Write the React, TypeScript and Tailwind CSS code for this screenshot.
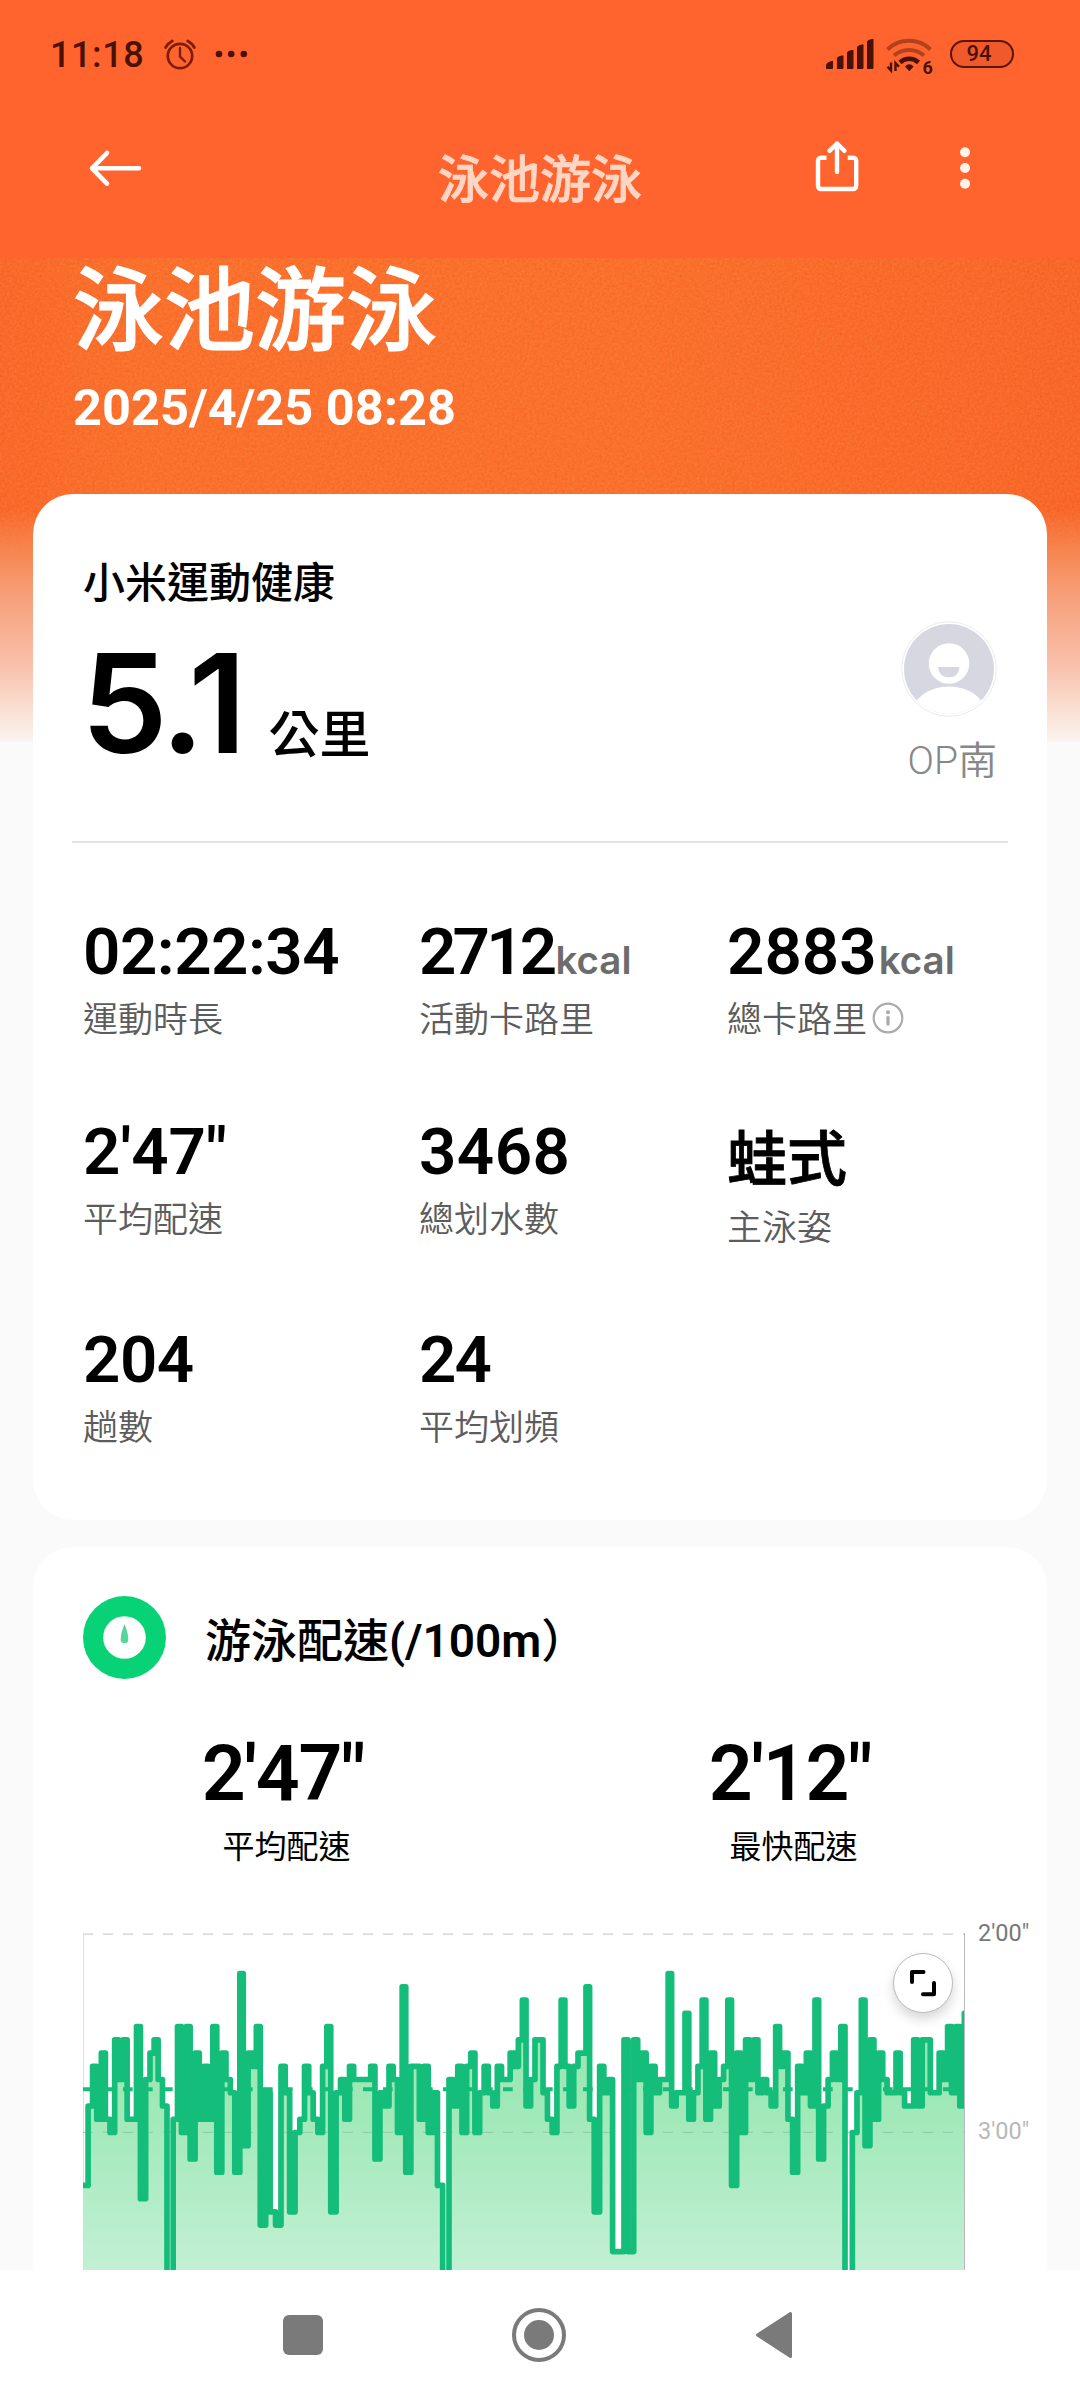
import { ReactNode } from "react";

// Each row is the x of its first lap followed by the pace level of every lap.
// One level is 4 s / 100 m, level 0 is 2'12".
const laps: number[][] = [
  [39, 16, 10, 7, 11, 6, 11, 12],
  [134, 5, 8, 5, 11, 11],
  [199.5, 4, 17, 8, 6, 5, 8, 10],
  [291, 30],
  [309.5, 11],
  [322.5, 4, 12, 4, 14, 6, 11, 7, 11],
  [428.5, 4, 15, 6, 8, 9, 15],
  [509.5, 0, 13, 6, 7],
  [559, 4, 19, 9, 18, 19],
  [633, 7, 9, 18, 12, 11],
  [703.5, 7, 9, 11, 12, 7],
  [770.5, 4, 18, 9, 8, 11],
  [838.5, 7, 8, 8, 8, 8],
  [902, 7, 14, 9, 10],
  [957, 7, 8, 12],
  [996.5, 1, 15, 7, 7, 11, 7, 12, 9, 16],
  [1118, 27],
  [1137, 8, 10, 7, 12, 7],
  [1202.5, 6, 12, 9, 7, 9, 10, 7, 8, 8],
  [1320.5, 6, 7, 5],
  [1357, 2, 10, 8, 5, 5, 9, 11, 12, 7],
  [1473.5, 2, 7, 10, 7],
  [1524, 6, 6],
  [1548, 1, 11, 18, 7, 9, 8, 21, 21],
  [1662, 5, 21, 5, 8, 6, 12, 7, 9, 8, 8],
  [1794.5, 0, 10, 9, 9],
  [1845, 3, 11, 9, 7],
  [1896.5, 2, 11, 6, 10, 8, 7],
  [1973.5, 2, 16, 6, 12, 5, 8, 5, 9, 8, 9, 10],
  [2117, 4, 7, 6, 11, 15, 7, 9, 6, 10],
  [2235, 2, 14, 10, 8, 6, 8],
  [2312.5, 4],
  [2325, 38],
  [2347, 12, 9],
  [2374, 2, 13, 5, 11, 6, 8, 9, 9],
  [2478, 6, 9, 10, 10],
  [2531, 5, 10, 5, 5, 9, 9],
  [2607.5, 6, 8, 4, 9, 4, 10],
  [2683, 3]
];

const CHART_LEFT = 39;
const CHART_RIGHT = 2685;
const CHART_BOTTOM = 1080;

const getPaceLine = () => {
  const points: string[] = [];
  laps.forEach(([start, ...levels], i) => {
    const end = laps[i + 1]?.[0] ?? CHART_RIGHT;
    const total = levels.reduce((sum, level) => sum + 33 + level, 0);
    let x = start;
    levels.forEach((level) => {
      const y = 191 + level * 39.7;
      const next = x + ((end - start) * (33 + level)) / total;
      points.push(`${x.toFixed(1)} ${y.toFixed(1)}`);
      points.push(`${next.toFixed(1)} ${y.toFixed(1)}`);
      x = next;
    });
  });
  return points.join(" L");
};

const StatusBar = () => {
  return (
    <div className="flex items-center justify-between h-[108px] pl-[50px] pr-[66px] text-[#4a1206]">
      <div className="flex items-center">
        <span className="mt-[2px] text-[36px] leading-[40px] font-medium tracking-[0.6px]">
          11:18
        </span>
        <svg className="ml-[19px]" width="34" height="32" viewBox="0 0 34 32" fill="none" stroke="#7d1c09" strokeLinecap="round">
          <circle cx="17" cy="18" r="12.2" strokeWidth="2.7" />
          <path d="M17 10v8.5l5 5" strokeWidth="2.4" />
          <path d="M2.6 9.5c1.4-2.6 3.8-5 6.7-6.5M31.4 9.500c-1.4-2.6-3.8-5-6.7-6.5" strokeWidth="2.8" />
        </svg>
        <svg className="ml-[17px]" width="34" height="8" viewBox="0 0 34 8" fill="currentColor">
          <circle cx="5" cy="4" r="3.3" />
          <circle cx="17.2" cy="4" r="3.3" />
          <circle cx="29.8" cy="4" r="3.3" />
        </svg>
      </div>
      <div className="flex items-center">
        <svg width="50" height="32" viewBox="0 0 50 32" fill="currentColor">
          <path d="M1 31v-3.5c0-2 3-4.5 7-4.5v6.5c0 1-.5 1.5-1.5 1.5z" />
          <path d="M12 31V20.500c0-1.500 2.500-3 6.500-3V29.500c0 1-.5 1.500-1.500 1.500z" />
          <path d="M22 31V15c0-1.500 2.500-3 6.500-3V29.500c0 1-.5 1.500-1.500 1.500z" />
          <path d="M32 31V9.500c0-1.500 2.500-3 6.500-3V29.500c0 1-.5 1.500-1.500 1.500z" />
          <path d="M42 31V4c0-1.500 2.500-3 6.500-3V29.500c0 1-.5 1.500-1.500 1.500z" />
        </svg>
        <svg className="ml-[10px] overflow-visible" width="50" height="40" viewBox="0 0 50 40" fill="none" stroke="currentColor">
          <g strokeWidth="4" opacity="0.42">
            <path d="M2.500 15.500a31 31 0 0 1 43 0" />
            <path d="M9 21.500a23 23 0 0 1 30 0" />
          </g>
          <path d="M15 28.500a13.500 13.500 0 0 1 18.500 0" strokeWidth="4.5" />
          <path d="M20 32.500q4.300-4.500 8.600 0l-4.300 4.800z" fill="currentColor" stroke="none" />
          <path d="M6 28.500v8l-3.500-3.800M10.500 37v-8l3.500 3.800" strokeWidth="2.4" />
          <text x="37.5" y="39.5" fill="currentColor" stroke="none" fontSize="18" fontWeight="700">
            6
          </text>
        </svg>
        <div className="flex items-center justify-center w-[64px] h-[28px] ml-[15px] pr-[6px] rounded-full border-[2.5px] border-[#5c1406] bg-[#f0592a] text-[22px] leading-[24px] font-medium">
          94
        </div>
      </div>
    </div>
  );
};

const AppBar = () => {
  return (
    <div className="flex items-start justify-between h-[150px] pt-[30px] pl-[88px] pr-[107px]">
      <svg width="54" height="60" viewBox="0 0 54 60" fill="none" stroke="#fff" strokeWidth="4.6" strokeLinecap="round" strokeLinejoin="round">
        <path d="M51 30.300H4M19 15L4 30.300l15 15.300" />
      </svg>
      <h1 className="ml-[296px] mt-[13px] text-[51px] leading-[60px] font-medium text-[#ffd6c4] whitespace-nowrap [-webkit-text-stroke:0.7px_#ffd6c4]">
        泳池游泳
      </h1>
      <div className="flex ml-auto">
        <svg width="46" height="60" viewBox="0 0 46 60" fill="none" stroke="#fff" strokeWidth="4.4" strokeLinecap="round" strokeLinejoin="round">
          <path d="M12.500 19.800H7a3 3 0 0 0-3 3v25.200a3 3 0 0 0 3 3h32.200a3 3 0 0 0 3-3V22.800a3 3 0 0 0-3-3h-5.500" strokeLinecap="butt" />
          <path d="M23 34V5.500M15.500 12.800L23 5.500l7.500 7.300" />
        </svg>
        <svg className="ml-[97px]" width="16" height="60" viewBox="0 0 16 60" fill="#fff3ec">
          <circle cx="8" cy="14.3" r="5" />
          <circle cx="8" cy="30" r="5" />
          <circle cx="8" cy="45.7" r="5" />
        </svg>
      </div>
    </div>
  );
};

const Avatar = () => {
  return (
    <svg width="96" height="98" viewBox="0 0 96 98">
      <clipPath id="avatar">
        <circle cx="48" cy="49" r="45" />
      </clipPath>
      <circle cx="48" cy="49" r="47.3" fill="#fff" stroke="#ececef" strokeWidth="1" />
      <g clipPath="url(#avatar)">
        <rect width="96" height="98" fill="#d6d7e0" />
        <circle cx="48" cy="43.5" r="20.3" fill="#fff" />
        <path d="M37 47h21.500q-1 10.300-10.700 10.300T37 47z" fill="#d6d7e0" />
        <ellipse cx="48" cy="92" rx="36" ry="25.5" fill="#fff" />
      </g>
    </svg>
  );
};

const InfoIcon = () => {
  return (
    <svg className="ml-[5px] -mt-[7px]" width="32" height="32" viewBox="0 0 32 32" fill="none" stroke="#aaa">
      <circle cx="16" cy="16" r="14.3" strokeWidth="2.2" />
      <circle cx="16" cy="10.2" r="2" fill="#aaa" stroke="none" />
      <path d="M16 15.500v6.500" strokeWidth="3.3" strokeLinecap="round" />
    </svg>
  );
};

const stats = [
  { label: "運動時長", tracking: "tracking-[-0.5px]", value: "02:22:34" },
  { label: "活動卡路里", tracking: "tracking-[-3.8px]", unit: "kcal", value: "2712" },
  { info: true, label: "總卡路里", unit: "kcal", value: "2883" },
  { label: "平均配速", value: "2'47\"" },
  { label: "總划水數", tracking: "tracking-[0.4px]", value: "3468" },
  { label: "主泳姿", text: true, value: "蛙式" },
  { label: "趟數", tracking: "tracking-[-0.5px]", value: "204" },
  { label: "平均划頻", tracking: "tracking-[-2px]", value: "24" }
];

const Digits = ({ children, className }: { children: ReactNode; className: string }) => {
  return (
    <span className={`font-semibold whitespace-nowrap ${className}`}>
      {children}
    </span>
  );
};

const SummaryCard = () => {
  return (
    <section className="h-[1026px] mx-[33px] px-[50px] pt-[60px] rounded-[40px] bg-white shrink-0">
      <div className="flex justify-between">
        <div>
          <h3 className="text-[42px] leading-[60px] font-medium">小米運動健康</h3>
          <div className="flex items-baseline mt-[29px] h-[120px]">
            <Digits className="-ml-[2px] text-[138px] leading-[120px] tracking-[-4px] font-[Inter,sans-serif]">
              5.1
            </Digits>
            <span className="ml-[26px] text-[51px] font-medium">公里</span>
          </div>
        </div>
        <div className="flex flex-col items-end mt-[66px]">
          <Avatar />
          <span className="mt-[18px] text-[39px] leading-[50px] font-[350] text-[#888]">
            OP南
          </span>
        </div>
      </div>
      <div className="h-[2px] -mx-[11px] mt-[55px] bg-[#e2e2e2]" />
      <div className="grid grid-cols-[336px_308px_1fr] grid-rows-[200px_208px_120px] mt-[77px]">
        {stats.map((stat) => (
          <div className="flex flex-col" key={stat.label}>
            <div className={stat.text ? "h-[72px]" : "h-[64px]"}>
              {stat.text ? (
                <span className="block text-[60px] leading-[82px] font-medium [-webkit-text-stroke:0.8px_#000]">
                  {stat.value}
                </span>
              ) : (
                <div className="flex items-baseline h-[64px]">
                  <Digits className={`text-[65.5px] leading-[63px] ${stat.tracking ?? ""}`}>
                    {stat.value}
                  </Digits>
                  {stat.unit && (
                    <span className="ml-[2px] text-[38.5px] leading-[40px] font-[Inter,sans-serif] font-semibold text-[#6c6c6c]">
                      {stat.unit}
                    </span>
                  )}
                </div>
              )}
            </div>
            <div className="flex items-center h-[50px] mt-[12px] text-[35px] leading-[50px] font-[350] text-[#5c5c5c]">
              {stat.label}
              {stat.info && <InfoIcon />}
            </div>
          </div>
        ))}
      </div>
    </section>
  );
};

const PaceChart = () => {
  const line = getPaceLine();

  return (
    <div className="relative flex mt-[66px] pl-[50px]">
      <svg className="shrink-0" width="882" height="337" viewBox="39 69 2646 1011">
        <defs>
          <linearGradient id="pace" x1="0" x2="0" y1="190" y2="1080" gradientUnits="userSpaceOnUse">
            <stop offset="0" stopColor="#8de5ab" />
            <stop offset="0.5" stopColor="#a2e9ba" />
            <stop offset="1" stopColor="#c2f0d4" />
          </linearGradient>
        </defs>
        <path d="M39 72.500H2685" stroke="#dcdcdc" strokeWidth="5" strokeDasharray="30 30" />
        <path d="M40.500 69V1080" stroke="#dedede" strokeWidth="3" />
        <path
          d={`M${CHART_LEFT} ${CHART_BOTTOM} L${line} L${CHART_RIGHT} ${CHART_BOTTOM}Z`}
          fill="url(#pace)"
        />
        <path d="M39 667H2685" stroke="#8fcaa5" strokeWidth="3" strokeDasharray="30 30" />
        <path d="M39 538H2685" stroke="#15bd7a" strokeWidth="12" strokeDasharray="29 31" />
        <path d={`M${line}`} fill="none" stroke="#15bd7a" strokeWidth="17" strokeLinejoin="round" />
        <path d="M2683.500 69V1080" stroke="#b9b9b9" strokeWidth="3" />
      </svg>
      <div className="flex flex-col ml-[13px] -mt-[14px] text-[23.5px] leading-[28px]">
        <span className="text-[#777]">2'00"</span>
        <span className="mt-[170px] text-[#b8b8b8]">3'00"</span>
      </div>
      <button className="absolute top-[20px] left-[860px] flex items-center justify-center w-[60px] h-[60px] rounded-full border border-[#bbb] bg-white shadow-[0_6px_12px_rgba(0,0,0,0.16)]">
        <svg width="28" height="28" viewBox="0 0 28 28" fill="none" stroke="#000" strokeWidth="4" strokeLinecap="round" strokeLinejoin="round">
          <path d="M3 13V3h11.500M25 14v11.200H14" />
        </svg>
      </button>
    </div>
  );
};

const paces = [
  { label: "平均配速", value: "2'47\"" },
  { label: "最快配速", value: "2'12\"" }
];

const PaceCard = () => {
  return (
    <section className="h-[723px] mx-[33px] mt-[27px] pt-[49px] rounded-t-[40px] bg-white shrink-0">
      <div className="flex items-center h-[83px] pl-[50px]">
        <svg width="83" height="83" viewBox="0 0 83 83">
          <circle cx="41.5" cy="41.5" r="41.5" fill="#07d376" />
          <circle cx="41.5" cy="41.5" r="21.3" fill="#fff" />
          <path d="M41.500 28q3.800 9 3.800 15.500a3.800 3.800 0 0 1-7.600 0q0-6.500 3.800-15.500z" fill="#54d69b" />
        </svg>
        <h3 className="ml-[39px] mt-[7px] text-[46px] leading-[60px] font-medium whitespace-nowrap">
          游泳配速<span className="font-semibold">(/100m</span>）
        </h3>
      </div>
      <div className="grid grid-cols-2 mt-[55px]">
        {paces.map((pace) => (
          <div className="flex flex-col items-center" key={pace.label}>
            <Digits className="mr-[7px] text-[77px] leading-[80px] tracking-[-1.3px]">
              {pace.value}
            </Digits>
            <span className="mt-[13px] text-[32px] leading-[40px]">{pace.label}</span>
          </div>
        ))}
      </div>
      <PaceChart />
    </section>
  );
};

const NavigationBar = () => {
  return (
    <nav className="flex items-center h-[130px] pl-[283px] bg-white shrink-0">
      <div className="w-[40px] h-[40px] rounded-[6px] bg-[#7a7a7a]" />
      <div className="flex items-center justify-center w-[54px] h-[54px] ml-[189px] rounded-full border-[4.5px] border-[#7a7a7a]">
        <div className="w-[30px] h-[30px] rounded-full bg-[#7a7a7a]" />
      </div>
      <svg className="ml-[189px]" width="38" height="48" viewBox="0 0 38 48" fill="#7a7a7a" stroke="#7a7a7a" strokeWidth="3" strokeLinejoin="round">
        <path d="M2.500 24L35.500 2.500v43z" />
      </svg>
    </nav>
  );
};

// Fine grain laid over the orange hero picture
const Grain = () => {
  return (
    <svg className="absolute left-0 top-[258px] opacity-25 mix-blend-soft-light" width="1080" height="300">
      <filter id="grain" x="0" y="0" width="100%" height="100%" colorInterpolationFilters="sRGB">
        <feTurbulence type="fractalNoise" baseFrequency="0.4" numOctaves="2" />
        <feColorMatrix values="1 0 0 0 -0.02  1 0 0 0 -0.02  1 0 0 0 -0.02  0 0 0 0 1" />
      </filter>
      <rect width="1080" height="300" filter="url(#grain)" />
    </svg>
  );
};

const App = () => {
  return (
    <main className="relative isolate flex flex-col w-[1080px] h-[2400px] overflow-hidden text-black font-[Roboto,'Noto_Sans_CJK_TC',sans-serif] bg-[#fafafa]">
      <div className="absolute -z-10 inset-x-0 top-0 h-[742px] bg-[linear-gradient(to_right,#f96a2a,#fa712d_12%,#fa712d_60%,#f86829)]">
        <Grain />
        <div className="absolute inset-x-0 top-[510px] bottom-0 bg-[linear-gradient(to_bottom,transparent,#f68c5a_51px,#f7a07a_87px,#f9c2ae_158px,#f9dccd_194px,#fbf4f0)]" />
      </div>
      <header className="h-[258px] bg-[#ff642f] shrink-0">
        <StatusBar />
        <AppBar />
      </header>
      <div className="flex flex-col h-[236px] pt-[4px] pl-[73px] text-white shrink-0">
        <h2 className="text-[91px] leading-[100px] font-medium [-webkit-text-stroke:1.2px_#fff]">
          泳池游泳
        </h2>
        <p className="mt-[16px] text-[50.5px] leading-[60px] font-bold">2025/4/25 08:28</p>
      </div>
      <SummaryCard />
      <PaceCard />
      <NavigationBar />
    </main>
  );
};

export default App;
